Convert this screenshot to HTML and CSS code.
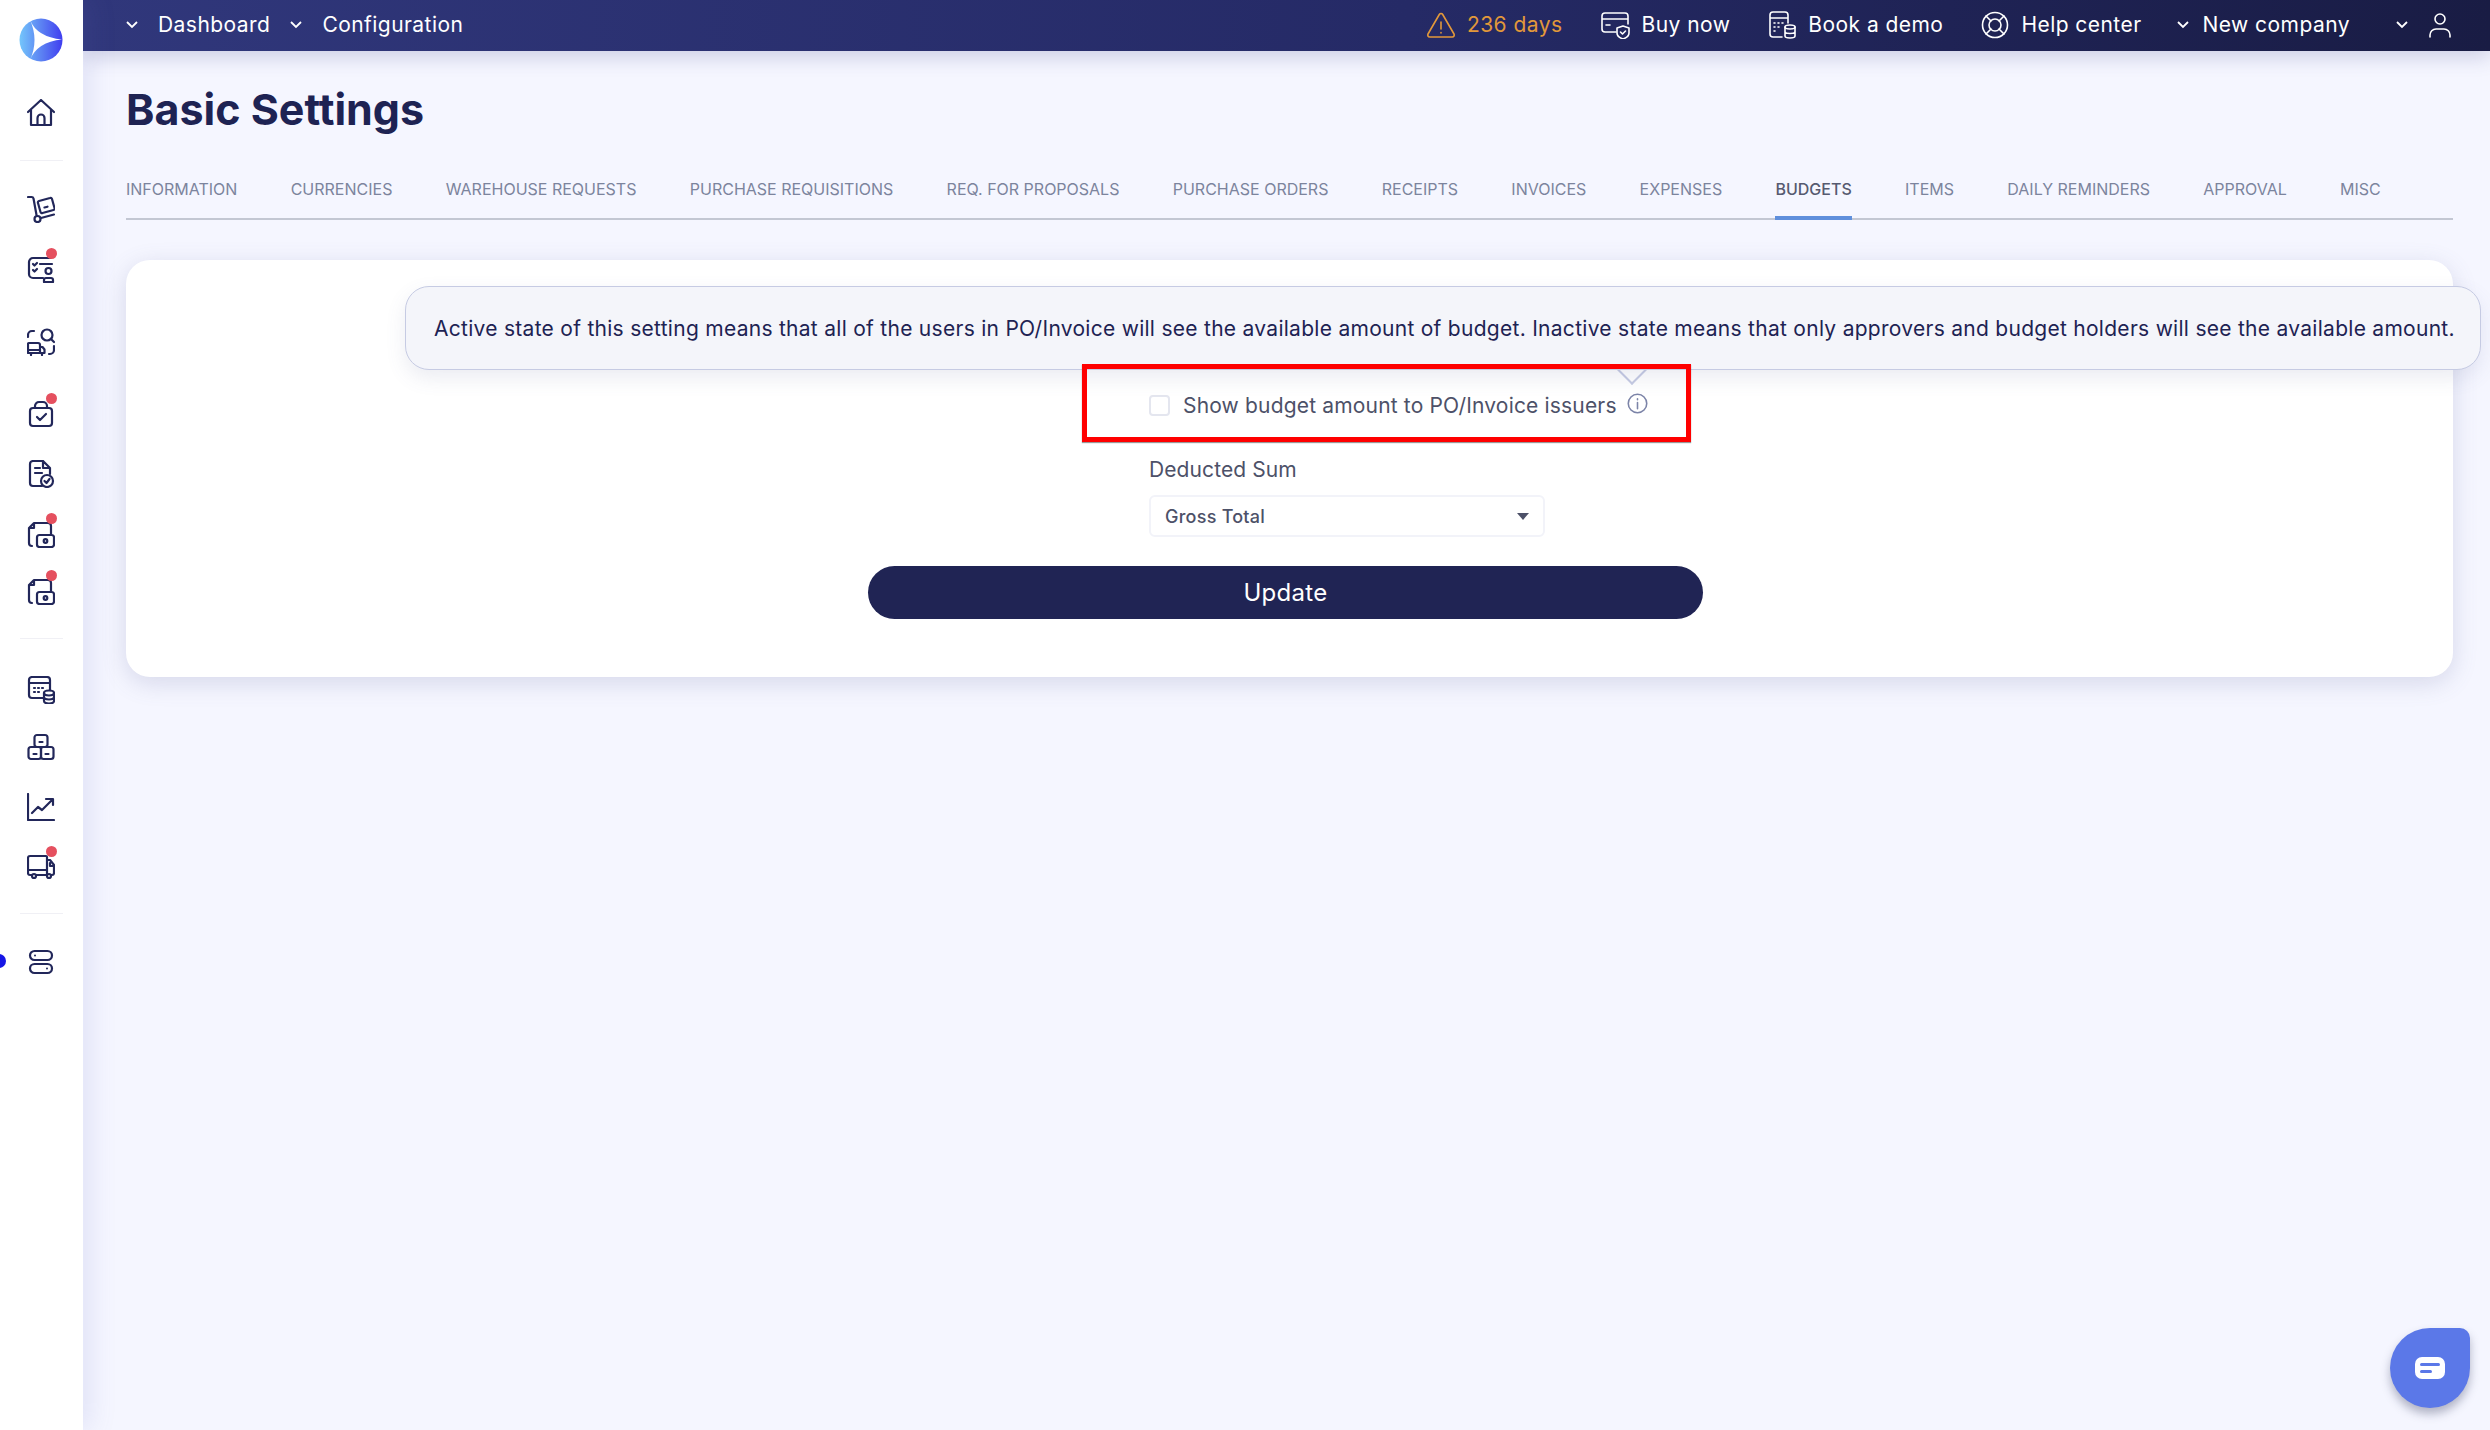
FILE: index.html
```html
<!DOCTYPE html>
<html lang="en">
<head>
  <meta charset="UTF-8">
  <title>Basic Settings</title>
  <link rel="stylesheet" href="styles.css">
</head>
<body>

<div class="app">
  <aside class="sidebar">
    <div class="logo">
      <svg width="44" height="44" viewBox="0 0 44 44">
        <defs>
          <linearGradient id="logoGrad" x1="0" y1="0" x2="1" y2="0">
            <stop offset="0" stop-color="#74c6fb"/>
            <stop offset="0.55" stop-color="#5a7cf2"/>
            <stop offset="1" stop-color="#3f3df0"/>
          </linearGradient>
        </defs>
        <circle cx="22" cy="22" r="21.5" fill="url(#logoGrad)"/>
        <path d="M11 2 Q18 19 43 21.5 Q18 24 11 42 Q20 22 11 2Z" fill="#fff"/>
      </svg>
    </div>

    <a class="nav-item nav-home">
      <svg class="nav-icon" viewBox="0 0 28 28">
        <path d="M1 13 14 1l13 12M4 11v15h20V11M10.500 26v-7a3.500 3.500 0 0 1 7 0v7"/>
      </svg>
    </a>
    <div class="nav-divider"></div>

    <a class="nav-item nav-first">
      <svg class="nav-icon" viewBox="0 0 28 28">
        <path d="M1 2h3.500a2 2 0 0 1 2 1.500L9.500 20"/>
        <circle cx="10.500" cy="24" r="3"/>
        <path d="m14 23 13-3.500M12 6l11-3a1.500 1.500 0 0 1 2 1l2.500 9a1.500 1.500 0 0 1-1 2l-11 3a1.500 1.500 0 0 1-2-1L11 8a1.500 1.500 0 0 1 1-2ZM17.500 12.500l3-.8"/>
      </svg>
    </a>
    <a class="nav-item has-dot">
      <svg class="nav-icon" viewBox="0 0 28 28">
        <path d="M24 3H6a4 4 0 0 0-4 4v12a4 4 0 0 0 4 4h10M6 9l1.500 1.500L10 8M6 15l1.500 1.500L10 14M13 9h12"/>
        <circle cx="21.500" cy="16" r="3"/>
        <path d="M17 27v-2a2 2 0 0 1 2-2h5a2 2 0 0 1 2 2v2z"/>
      </svg>
    </a>
    <a class="nav-item nav-wide">
      <svg class="nav-icon" viewBox="0 0 28 28">
        <path d="M1 9V7a4 4 0 0 1 4-4h2M27 18v4a4 4 0 0 1-4 4h-1"/>
        <circle cx="20" cy="7" r="5.500"/>
        <path d="m24 11 3 3"/>
        <path d="M2 15h9a2 2 0 0 1 2 2v8H1v-9a1 1 0 0 1 1-1zM13 19h2.500l2 2.500V25H13M1 22h12M4 25v2M15 25v2"/>
      </svg>
    </a>
    <a class="nav-item has-dot nav-mid">
      <svg class="nav-icon" viewBox="0 0 28 28">
        <rect x="3" y="8" width="22" height="18" rx="3"/>
        <path d="M8 8V6a4 4 0 0 1 4-4h4a4 4 0 0 1 4 4v2M10 17l3 3 6-6"/>
      </svg>
    </a>
    <a class="nav-item">
      <svg class="nav-icon" viewBox="0 0 28 28">
        <path d="M15 26H6a3 3 0 0 1-3-3V4a3 3 0 0 1 3-3h10l7 7v6M16 1v7h7M8 8h5M8 13h7"/>
        <circle cx="20" cy="21" r="6"/>
        <path d="m17.500 21 2 2 3-4"/>
      </svg>
    </a>
    <a class="nav-item has-dot">
      <svg class="nav-icon" viewBox="0 0 28 28">
        <path d="M5 26a3 3 0 0 1-3-3V8l5-5h14a3 3 0 0 1 3 3v8M2 8h5V3"/>
        <rect x="10" y="15" width="17" height="12" rx="2.500"/>
        <circle cx="18.500" cy="21" r="1.800"/>
      </svg>
    </a>
    <a class="nav-item has-dot nav-tight">
      <svg class="nav-icon" viewBox="0 0 28 28">
        <path d="M5 26a3 3 0 0 1-3-3V8l5-5h14a3 3 0 0 1 3 3v8M2 8h5V3"/>
        <rect x="10" y="15" width="17" height="12" rx="2.500"/>
        <circle cx="18.500" cy="21" r="1.800"/>
      </svg>
    </a>
    <div class="nav-divider"></div>

    <a class="nav-item nav-first-b">
      <svg class="nav-icon" viewBox="0 0 28 28">
        <path d="M17 22H5a3 3 0 0 1-3-3V4a3 3 0 0 1 3-3h15a3 3 0 0 1 3 3v10M2 7h21M7 12h1m3 0h1m3 0h1M7 16h1m3 0h1"/>
        <ellipse cx="22" cy="17" rx="5" ry="2.500"/>
        <path d="M17 17v8c0 1.400 2.200 2.500 5 2.500s5-1.100 5-2.500v-8M17 21c0 1.400 2.200 2.500 5 2.500s5-1.100 5-2.500"/>
      </svg>
    </a>
    <a class="nav-item nav-tight">
      <svg class="nav-icon" viewBox="0 0 28 28">
        <rect x="7.500" y="2" width="13" height="12" rx="2.500"/>
        <rect x="1.500" y="14" width="12.500" height="12" rx="2.500"/>
        <rect x="14" y="14" width="12.500" height="12" rx="2.500"/>
        <path d="M12.500 9h3M6.500 21h3M18.500 21h3"/>
      </svg>
    </a>
    <a class="nav-item">
      <svg class="nav-icon" viewBox="0 0 28 28">
        <path d="M1 1v26h26M5 20l6-6 4 3 10-10M19 6h7v6"/>
      </svg>
    </a>
    <a class="nav-item has-dot">
      <svg class="nav-icon" viewBox="0 0 28 28">
        <path d="M5 22H3a2 2 0 0 1-2-2V5a2 2 0 0 1 2-2h16a1 1 0 0 1 1 1v18H9M1 17h19M20 7h3l4 5v8a2 2 0 0 1-2 2h-1M23 10v3h4"/>
        <circle cx="7" cy="23" r="2"/>
        <circle cx="22" cy="23" r="2"/>
      </svg>
    </a>
    <div class="nav-divider nav-divider-low"></div>

    <a class="nav-item nav-active">
      <svg class="nav-icon" viewBox="0 0 28 28">
        <rect x="3" y="3" width="22" height="9" rx="4.500"/>
        <rect x="3" y="16" width="22" height="9" rx="4.500"/>
        <circle class="fill" cx="8" cy="7.500" r="1"/>
        <circle class="fill" cx="20" cy="20.500" r="1"/>
      </svg>
    </a>
  </aside>

  <div class="content">
    <header class="topbar">
      <nav class="topbar-left">
        <a class="top-link"><svg class="chev" viewBox="0 0 12 8"><path d="m1 1 5 5 5-5"/></svg>Dashboard</a>
        <a class="top-link"><svg class="chev" viewBox="0 0 12 8"><path d="m1 1 5 5 5-5"/></svg>Configuration</a>
      </nav>
      <div class="topbar-right">
        <a class="top-item trial">
          <svg class="top-icon" viewBox="0 0 32 28"><path d="M14.300 3.500 3 23a2 2 0 0 0 1.700 3h22.600a2 2 0 0 0 1.700-3L17.700 3.500a2 2 0 0 0-3.400 0ZM16 11v7M16 21.500v.5"/></svg>
          236 days
        </a>
        <a class="top-item buy">
          <svg class="top-icon" viewBox="0 0 32 28"><path d="M17 21H6a3 3 0 0 1-3-3V5a3 3 0 0 1 3-3h20a3 3 0 0 1 3 3v8M3 8h26M7 14h4"/><path d="M24 15l6 2v5c0 3-3 5-6 6-3-1-6-3-6-6v-5zM21.500 21l2 2 3-3"/></svg>
          Buy now
        </a>
        <a class="top-item">
          <svg class="top-icon" viewBox="0 0 32 28"><path d="M16 26H7a3 3 0 0 1-3-3V4a3 3 0 0 1 3-3h12a3 3 0 0 1 3 3v8M4 7h18M8 12h1m3 0h1m3 0h1M8 16h1m3 0h1M8 20h1"/><ellipse cx="24" cy="16" rx="5" ry="2"/><path d="M19 16v9c0 1.100 2.200 2 5 2s5-.9 5-2v-9M19 20.500c0 1.100 2.200 2 5 2s5-.9 5-2"/></svg>
          Book a demo
        </a>
        <a class="top-item">
          <svg class="top-icon" viewBox="0 0 32 28"><circle cx="16" cy="14" r="12.500"/><circle cx="16" cy="14" r="6"/><path d="m7 5 5 5M25 5l-5 5M7 23l5-5M25 23l-5-5"/></svg>
          Help center
        </a>
        <a class="top-item company"><svg class="chev" viewBox="0 0 12 8"><path d="m1 1 5 5 5-5"/></svg>New company</a>
        <a class="top-item user">
          <svg class="chev" viewBox="0 0 12 8"><path d="m1 1 5 5 5-5"/></svg>
          <svg class="top-icon user-icon" viewBox="0 0 24 26"><circle cx="12" cy="7" r="5"/><path d="M2 25v-2a6 6 0 0 1 6-6h8a6 6 0 0 1 6 6v2"/></svg>
        </a>
      </div>
    </header>

    <main class="page">
      <h1 class="page-title">Basic Settings</h1>

      <ul class="tabs">
        <li>Information</li>
        <li>Currencies</li>
        <li>Warehouse requests</li>
        <li>Purchase requisitions</li>
        <li>Req. for proposals</li>
        <li>Purchase orders</li>
        <li>Receipts</li>
        <li>Invoices</li>
        <li>Expenses</li>
        <li class="active">Budgets</li>
        <li>Items</li>
        <li>Daily reminders</li>
        <li>Approval</li>
        <li>Misc</li>
      </ul>

      <section class="card">
        <div class="tooltip">Active state of this setting means that all of the users in PO/Invoice will see the available amount of budget. Inactive state means that only approvers and budget holders will see the available amount.</div>
        <div class="tooltip-arrow"></div>
        <div class="highlight"></div>

        <form class="form">
          <label class="check-row">
            <span class="checkbox"></span>
            <span>Show budget amount to PO/Invoice issuers</span>
            <svg class="info" viewBox="0 0 20 20"><circle cx="10" cy="10" r="8.800"/><path d="M10 9v6M10 5.500v1"/></svg>
          </label>
          <div class="field">
            <div class="field-label">Deducted Sum</div>
            <div class="select">Gross Total<span class="caret"></span></div>
          </div>
          <button class="update" type="button">Update</button>
        </form>
      </section>
    </main>
  </div>

  <a class="chat">
    <svg width="30" height="22" viewBox="0 0 30 22"><rect width="30" height="22" rx="7" fill="#fff"/><rect x="5" y="6" width="20" height="3" rx="1.500" fill="#5b78e8"/><rect x="5" y="13" width="12" height="3" rx="1.500" fill="#5b78e8"/></svg>
  </a>
</div>

</body>
</html>
```

FILE: styles.css
```css
* {
  box-sizing: border-box;
}

html, body {
  height: 100%;
  margin: 0;
}

body {
  font-family: Inter, "Liberation Sans", sans-serif;
  background-color: #f5f6ff;
  color: #1e2353;
  overflow: hidden;
}

.app {
  display: flex;
  height: 100vh;
}

/* sidebar */
.sidebar {
  position: relative;
  z-index: 2;
  width: 83px;
  flex: none;
  display: flex;
  flex-direction: column;
  align-items: center;
  padding-top: 18px;
  background-color: #fff;
  box-shadow: 8px 0 24px rgba(100, 105, 190, 0.13);
}

.logo {
  height: 44px;
  margin-bottom: 22px;
  transform: translateX(-1px);
}

.nav-item {
  position: relative;
  display: flex;
  align-items: center;
  justify-content: center;
  width: 100%;
  height: 58px;
  margin-top: 2px;
  padding-right: 2px;
}

.nav-home {
  margin-top: 0;
}

.nav-first {
  margin-top: 19px;
}

.nav-wide {
  margin-top: 15px;
}

.nav-mid {
  margin-top: 14px;
}

.nav-tight {
  margin-top: -1px;
}

.nav-first-b {
  margin-top: 22px;
}

.nav-icon {
  width: 28px;
  height: 28px;
  fill: none;
  stroke: #22275a;
  stroke-width: 2.2;
  stroke-linecap: round;
  stroke-linejoin: round;
}

.nav-icon .fill {
  fill: #22275a;
  stroke: none;
}

.has-dot::after {
  content: "";
  position: absolute;
  top: 8px;
  left: 46px;
  width: 11px;
  height: 11px;
  border-radius: 50%;
  background-color: #e5505f;
}

.nav-divider {
  width: 43px;
  height: 1px;
  margin-top: 18px;
  background-color: #f0f0f5;
}

.nav-divider-low {
  margin-top: 17px;
}

.nav-active {
  margin-top: 19px;
}

.nav-active::before {
  content: "";
  position: absolute;
  top: 21px;
  left: -8px;
  width: 14px;
  height: 14px;
  border-radius: 50%;
  background-color: #1616e6;
}

/* top bar */
.content {
  flex: 1;
  min-width: 0;
  display: flex;
  flex-direction: column;
}

.topbar {
  position: relative;
  z-index: 1;
  display: flex;
  align-items: center;
  justify-content: space-between;
  height: 51px;
  flex: none;
  padding: 0 38px 2px 43px;
  color: #fff;
  font-size: 21px;
  letter-spacing: 0.45px;
  background: linear-gradient(90deg, #30377b 0%, #252a66 55%, #191c44 100%);
  box-shadow: 0 6px 20px rgba(60, 65, 130, 0.22);
}

.topbar-left,
.topbar-right {
  display: flex;
  align-items: center;
}

.top-link {
  display: flex;
  align-items: center;
  gap: 20px;
  margin-right: 20px;
}

.top-item {
  display: flex;
  align-items: center;
  gap: 10px;
  margin-left: 36px;
}

.trial {
  color: #e2983a;
}

.chev {
  width: 12px;
  height: 8px;
  fill: none;
  stroke: #fff;
  stroke-width: 1.8;
}

.top-icon {
  width: 32px;
  height: 28px;
  fill: none;
  stroke: currentColor;
  stroke-width: 1.6;
  stroke-linecap: round;
  stroke-linejoin: round;
}

.buy {
  margin-left: 37px;
}

.company {
  gap: 14px;
  margin-left: 35px;
}

.user {
  gap: 20px;
  margin-left: 46px;
}

.user-icon {
  width: 24px;
  height: 26px;
}

/* page */
.page {
  flex: 1;
  padding: 0 37px 0 43px;
}

.page-title {
  margin: 32px 0 0;
  font-size: 43px;
  line-height: 52px;
  font-weight: 700;
  color: #1e2353;
}

.tabs {
  display: flex;
  gap: 53.3px;
  margin: 44px 0 0;
  padding: 0;
  list-style: none;
  border-bottom: 2px solid #c3c7d3;
}

.tabs li {
  margin-bottom: -2px;
  padding-bottom: 17px;
  font-size: 16px;
  line-height: 20px;
  text-transform: uppercase;
  color: #7c849d;
  border-bottom: 4px solid transparent;
}

.tabs li.active {
  color: #565a70;
  font-weight: 500;
  border-bottom-color: #5f8fdc;
}

.card {
  position: relative;
  height: 417px;
  margin-top: 40px;
  border-radius: 24px;
  background-color: #fff;
  box-shadow: 0 6px 24px rgba(90, 95, 150, 0.2);
}

.tooltip {
  position: absolute;
  z-index: 2;
  top: 26px;
  left: 279px;
  width: 2076px;
  height: 84px;
  display: flex;
  align-items: center;
  padding-left: 28px;
  white-space: nowrap;
  font-size: 21px;
  letter-spacing: 0.28px;
  color: #1e2353;
  background-color: #f4f5fa;
  border: 1px solid #c6cbe3;
  border-radius: 24px;
  box-shadow: 0 8px 20px rgba(90, 95, 150, 0.12);
}

.tooltip-arrow {
  position: absolute;
  z-index: 1;
  top: 96px;
  left: 1494px;
  width: 24px;
  height: 24px;
  background-color: #fff;
  border-right: 2px solid #c6cbe3;
  border-bottom: 2px solid #c6cbe3;
  transform: rotate(45deg);
}

.highlight {
  position: absolute;
  z-index: 3;
  top: 104px;
  left: 956px;
  width: 609px;
  height: 78px;
  border: 5px solid #f00;
  box-shadow: 0 1px 1px rgba(0, 0, 0, 0.4);
}

.form {
  display: flex;
  flex-direction: column;
  width: 835px;
  margin-left: 742px;
  padding-top: 128px;
}

.check-row {
  display: flex;
  align-items: center;
  gap: 13px;
  height: 34px;
  padding-left: 281px;
  font-size: 21px;
  letter-spacing: 0.17px;
  color: #4d5168;
}

.checkbox {
  width: 21px;
  height: 21px;
  border: 2px solid #e4e6ef;
  border-radius: 4px;
  background-color: #fff;
}

.info {
  width: 21px;
  height: 21px;
  margin: -4px 0 0 -3px;
  fill: none;
  stroke: #7c84a8;
  stroke-width: 1.5;
  stroke-linecap: round;
}

.field {
  margin-top: 35px;
  padding-left: 281px;
}

.field-label {
  font-size: 21px;
  line-height: 26px;
  letter-spacing: 0.1px;
  color: #4d5168;
}

.select {
  display: flex;
  align-items: center;
  justify-content: space-between;
  width: 396px;
  height: 42px;
  margin-top: 12px;
  padding: 0 14px 0 14px;
  font-size: 18px;
  font-weight: 500;
  letter-spacing: 0.25px;
  color: #4d5168;
  background-color: #fff;
  border: 2px solid #f2f3f9;
  border-radius: 6px;
}

.caret {
  width: 0;
  height: 0;
  border-left: 6px solid transparent;
  border-right: 6px solid transparent;
  border-top: 7px solid #4d5168;
}

.update {
  width: 835px;
  height: 53px;
  margin-top: 29px;
  padding: 0;
  font-family: inherit;
  font-size: 24px;
  letter-spacing: 0.3px;
  color: #fff;
  background-color: #202454;
  border: none;
  border-radius: 27px;
}

.chat {
  position: fixed;
  z-index: 4;
  right: 20px;
  bottom: 22px;
  display: flex;
  align-items: center;
  justify-content: center;
  width: 80px;
  height: 80px;
  background-color: #5b78e8;
  border-radius: 50% 10px 50% 50%;
  box-shadow: 0 6px 10px rgba(50, 55, 90, 0.35);
}
```
